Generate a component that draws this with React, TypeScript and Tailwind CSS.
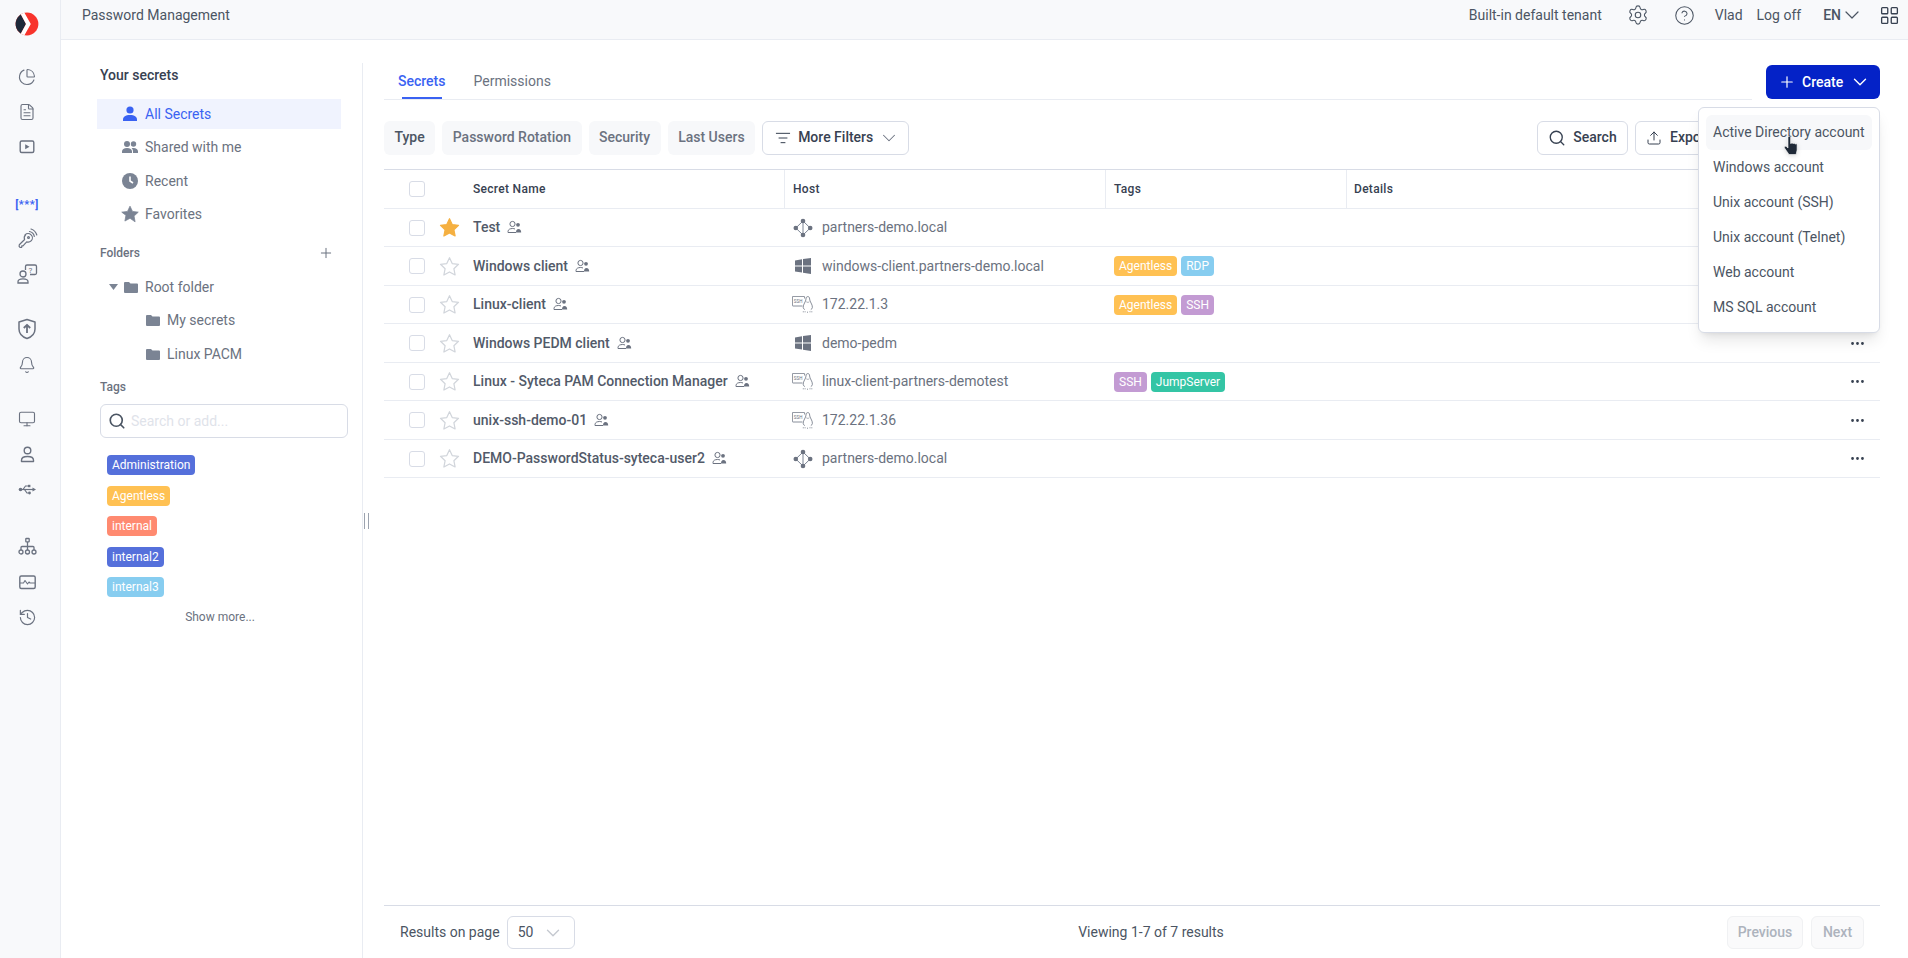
import React from "react";
import {
  ChartPie, FileText, Bell, Monitor, History, Settings, CircleHelp, ChevronDown, LayoutGrid, Plus, Search, Upload, ListFilter, Ellipsis,
} from "lucide-react";

const F = "[font-family:Roboto,sans-serif]";

function UsersMini({ className = "" }: { className?: string }) {
  return (
    <svg width="15" height="15" viewBox="0 0 15 15" fill="none" stroke="#6b7280" strokeWidth="1" className={className}>
      <circle cx="5.5" cy="4" r="2.6" />
      <path d="M1 12.5v-1c0-2 2-3 4.500-3 1 0 1.800.2 2.500.5" />
      <path d="M1 12.5h8" />
      <circle cx="11" cy="4.8" r="1.9" fill="#6b7280" stroke="none" />
      <path d="M9 12.5c0-2 .8-3.500 2.500-3.500s2.700 1.400 2.700 3.500z" fill="#6b7280" stroke="none" />
    </svg>
  );
}

function StarIcon({ filled = false }: { filled?: boolean }) {
  return (
    <svg width="21" height="21" viewBox="0 0 24 24" fill={filled ? "#f5b041" : "none"} stroke={filled ? "#f5b041" : "#d1d5db"} strokeWidth="1.4" strokeLinejoin="round" className="shrink-0">
      <path d="M12 2l3.100 6.600 7.200.9-5.300 5 1.400 7.200L12 18.200l-6.400 3.500L7 14.500l-5.300-5 7.200-.9z" />
    </svg>
  );
}

function DomainIcon() {
  return (
    <svg width="20" height="20" viewBox="0 0 20 20" fill="none" stroke="#7b8494" strokeWidth="1" className="shrink-0">
      <path d="M10 3 L2.800 10 L10 17 L17.200 10 Z M10 3 V17" />
      <circle cx="10" cy="3" r="2.300" fill="#6b7280" stroke="none" />
      <circle cx="2.800" cy="10" r="2.300" fill="#6b7280" stroke="none" />
      <circle cx="17.200" cy="10" r="2.300" fill="#6b7280" stroke="none" />
      <circle cx="10" cy="17" r="2.300" fill="#6b7280" stroke="none" />
    </svg>
  );
}

function WinIcon() {
  return (
    <svg width="16" height="16" viewBox="0 0 16 16" fill="#6b7280" className="shrink-0">
      <path d="M0 2.400 L7 1.300 V7.400 H0 Z M8 1.100 L16 0 V7.400 H8 Z M0 8.500 H7 V14.600 L0 13.600 Z M8 8.500 H16 V16 L8 14.800 Z" />
    </svg>
  );
}

function SshLinuxIcon() {
  return (
    <svg width="22" height="17" viewBox="0 0 22 17" fill="none" stroke="#6b7280" strokeWidth="0.8" className="shrink-0">
      <path d="M10.500 10H1a.6.6 0 0 1-.6-.6V1A.6.6 0 0 1 1 .4h11a.6.6 0 0 1 .6.6v1.500" />
      <text x="1.800" y="6.500" fontSize="4.500" fontFamily="Roboto" fill="#6b7280" stroke="none">SSH</text>
      <path d="M15.800.6c-1.300 0-1.800 1-1.800 2.400 0 2.500-3 5.500-2.800 8.300.1 1.200.7 1.900 1.600 2.300" />
      <path d="M15.800.6c1.300 0 1.800 1 1.800 2.400 0 2.500 3 5.500 2.800 8.300-.1 1.200-.7 1.900-1.600 2.300" />
      <path d="M14.300 5.800c.9.700 2.100.7 3 0" strokeWidth="0.6" />
      <path d="M10.800 15.800h3.200M15 16.200h1.500M17.500 15.800h3.200" strokeDasharray="1 .8" />
    </svg>
  );
}

function Tag({ t, c }: { t: string; c: string }) {
  return <span className={`inline-flex h-[20px] items-center rounded-[4px] px-[5px] text-[12px] leading-none text-white ${c}`}>{t}</span>;
}

const ORANGE = "bg-[#ffc153]";
const BLUE = "bg-[#5570db]";
const SALMON = "bg-[#ff8a70]";
const SKY = "bg-[#87cdf0]";
const PURPLE = "bg-[#c39bd3]";
const TEAL = "bg-[#34c5a5]";

const rows: { name: string; host: string; icon: "d" | "w" | "l"; star?: boolean; tags: [string, string][]; dots?: boolean; h: string }[] = [
  { name: "Test", host: "partners-demo.local", icon: "d", star: true, tags: [], h: "h-[38px]" },
  { name: "Windows client", host: "windows-client.partners-demo.local", icon: "w", tags: [["Agentless", ORANGE], ["RDP", SKY]], h: "h-[39px]" },
  { name: "Linux-client", host: "172.22.1.3", icon: "l", tags: [["Agentless", ORANGE], ["SSH", PURPLE]], h: "h-[38px]" },
  { name: "Windows PEDM client", host: "demo-pedm", icon: "w", tags: [], h: "h-[39px]", dots: true },
  { name: "Linux - Syteca PAM Connection Manager", host: "linux-client-partners-demotest", icon: "l", tags: [["SSH", PURPLE], ["JumpServer", TEAL]], dots: true, h: "h-[38px]" },
  { name: "unix-ssh-demo-01", host: "172.22.1.36", icon: "l", tags: [], dots: true, h: "h-[39px]" },
  { name: "DEMO-PasswordStatus-syteca-user2", host: "partners-demo.local", icon: "d", tags: [], dots: true, h: "h-[38px]" },
];

const I = "#6b7280";

function NavIcons() {
  return (
    <div className="flex flex-col items-center">
      <svg width="24" height="24" viewBox="0 0 24 24" className="mt-[12px]">
        <defs>
          <clipPath id="logoclip"><circle cx="12" cy="12" r="11.400" /></clipPath>
        </defs>
        <g clipPath="url(#logoclip)">
          <rect width="24" height="24" fill="#f8342c" />
          <polygon points="0,0 4.500,0 11,12 4.500,24 0,24" fill="#1f2a3a" />
          <polygon points="4.500,0 9,0 15.800,12 9,24 4.500,24 11,12" fill="#fff" />
        </g>
      </svg>
      <ChartPie size={18} color={I} strokeWidth={1.5} className="mt-[32px]" />
      <FileText size={18} color={I} strokeWidth={1.5} className="mt-[17px]" />
      <svg width="18" height="18" viewBox="0 0 18 18" fill="none" className="mt-[17px]">
        <rect x="2.200" y="3" width="13.600" height="11.500" rx="1.500" stroke={I} strokeWidth="1.400" />
        <path d="M7.200 6.300v5l4.300-2.500z" fill={I} />
      </svg>
      <div className="mt-[39px] flex h-[18px] items-center text-[11px] font-bold leading-none tracking-[0.5px] text-[#3a62f2]">[***]</div>
      <svg width="22" height="22" viewBox="0 0 22 22" fill="none" stroke={I} strokeWidth="1.200" strokeLinecap="round" strokeLinejoin="round" className="mt-[15px]">
        <path d="M9 6.800a4.300 4.300 0 0 1 6.100 6.100c-1.200 1.200-3 1.500-4.400 1L7 17.800l-1.200.1-.1 1.400-1.500.2-1.100-1.100.2-1.700 5.300-5.200c-.6-1.500-.3-3.400.9-4.500z" />
        <circle cx="12.500" cy="9.500" r="0.900" />
        <path d="M13.500 3.500a6 6 0 0 1 4.800 4.800M15 1a9 9 0 0 1 5.800 6" />
      </svg>
      <svg width="22" height="22" viewBox="0 0 22 22" fill="none" stroke={I} strokeWidth="1.300" className="mt-[13px]">
        <circle cx="7" cy="11" r="3" />
        <path d="M2 20v-1.200c0-2 2-3 5-3s5 1 5 3V20z" />
        <path d="M9.500 7V3.500A1.500 1.500 0 0 1 11 2h8a1.500 1.500 0 0 1 1.500 1.500V10A1.500 1.500 0 0 1 19 11.500h-5" />
        <text x="12.500" y="9.500" fontSize="8" fontFamily="Roboto" fill={I} stroke="none">?</text>
      </svg>
      <svg width="20" height="22" viewBox="0 0 20 22" fill="none" stroke={I} strokeWidth="1.500" strokeLinejoin="round" className="mt-[33px]">
        <path d="M10 1.500l8 2.500v7c0 5-3.500 8-8 9.500-4.500-1.500-8-4.500-8-9.500V4z" />
        <path d="M10 15V7M6.800 10L10 6.800l3.200 3.200" strokeWidth="1.800" />
      </svg>
      <Bell size={18} color={I} strokeWidth={1.5} className="mt-[16px]" />
      <Monitor size={18} color={I} strokeWidth={1.5} className="mt-[36px]" />
      <svg width="19" height="19" viewBox="0 0 19 19" fill="none" stroke={I} strokeWidth="1.400" className="mt-[17px]">
        <circle cx="9.500" cy="5.500" r="3.300" />
        <path d="M3.500 16.500v-1.300c0-2.200 2.500-3.700 6-3.700s6 1.500 6 3.700v1.300z" strokeLinejoin="round" />
      </svg>
      <svg width="19" height="19" viewBox="0 0 19 19" fill="none" stroke={I} strokeWidth="1.200" className="mt-[16px]">
        <circle cx="2.500" cy="9.500" r="1.800" fill={I} stroke="none" />
        <path d="M2.500 9.500H15" />
        <path d="M14.500 7.500v4l3.500-2z" fill={I} stroke="none" />
        <path d="M5 9.500l2.500-3.500h3" />
        <rect x="10" y="4.800" width="2.400" height="2.400" fill={I} stroke="none" />
        <path d="M6.500 9.500l2.500 3.500h1.500" />
        <circle cx="11.500" cy="13" r="1.400" fill={I} stroke="none" />
      </svg>
      <svg width="19" height="19" viewBox="0 0 19 19" fill="none" stroke={I} strokeWidth="1.300" className="mt-[38px]">
        <rect x="7.800" y="1.500" width="3.400" height="3.400" rx="0.600" />
        <circle cx="3" cy="15" r="2" />
        <circle cx="9.500" cy="15" r="2" />
        <circle cx="16" cy="15" r="2" />
        <path d="M9.500 5v8M3 13v-2.500c0-.5.4-1 1-1h11c.6 0 1 .5 1 1V13" />
      </svg>
      <svg width="19" height="19" viewBox="0 0 19 19" fill="none" stroke={I} strokeWidth="1.400" strokeLinejoin="round" className="mt-[17px]">
        <rect x="1.800" y="3" width="15.400" height="12.500" rx="1.500" />
        <path d="M2 10h3.500l1.500-2.500 2.500 3.500 1.500-2 1 1h5" strokeWidth="1.100" />
      </svg>
      <History size={19} color={I} strokeWidth={1.5} className="mt-[16px]" />
    </div>
  );
}

function SideRow({ label, active, icon }: { label: string; active?: boolean; icon: React.ReactNode }) {
  return (
    <div className={`flex h-[30px] items-center gap-[7px] pl-[25px] text-[14px] ${active ? "bg-[#f0f3fe] text-[#3a62f2]" : "text-[#6b7280]"}`}>
      <span className="flex w-[16px] justify-center">{icon}</span>
      <span>{label}</span>
    </div>
  );
}

function Folder({ className = "" }: { className?: string }) {
  return (
    <svg width="14" height="13" viewBox="0 0 14 13" fill="#7b8494" className={className}>
      <path d="M0 2a1 1 0 0 1 1-1h4l1.500 1.500H13a1 1 0 0 1 1 1V11a1 1 0 0 1-1 1H1a1 1 0 0 1-1-1z" />
    </svg>
  );
}

function Chip({ t, dark }: { t: string; dark?: boolean }) {
  return <div className={`flex h-[34px] items-center rounded-[6px] bg-[#f7f8fa] px-[10.5px] pb-[1px] text-[14px] font-medium ${dark ? "text-[#4b5563]" : "text-[#6b7280]"}`}>{t}</div>;
}

export default function App() {
  return (
    <div className={`flex h-screen w-full overflow-hidden bg-white text-[14px] text-[#4b5563] ${F}`}>
      <aside className="w-[61px] shrink-0 border-r border-[#e9ecf2] bg-[#f8f9fb]">
        <div className="w-[54px]"><NavIcons /></div>
      </aside>
      <div className="flex min-w-0 flex-1 flex-col">
        <header className="flex h-[40px] shrink-0 items-center border-b border-[#e9ecf2] bg-[#f8f9fb] pb-[9px] pl-[21px] pr-[8px] text-[14px] text-[#4b5563]">
          <span>Password Management</span>
          <div className="ml-auto flex items-center">
            <span>Built-in default tenant</span>
            <Settings size={22} strokeWidth={1.200} color="#4b5563" className="ml-[25px]" />
            <CircleHelp size={21} strokeWidth={1.200} color="#4b5563" className="ml-[25px]" />
            <span className="ml-[20px]">Vlad</span>
            <span className="ml-[14px]">Log off</span>
            <span className="ml-[22px] font-medium">EN</span>
            <ChevronDown size={24} strokeWidth={1.200} color="#4b5563" className="ml-[-1px]" />
            <LayoutGrid size={21} strokeWidth={1.500} color="#374151" className="ml-[15px]" />
          </div>
        </header>
        <div className="flex min-h-0 flex-1">
          <section className="relative w-[302px] shrink-0">
            <div className="absolute bottom-0 right-0 top-[23px] w-px bg-[#e9ecf2]" />
            <div className="pl-[39px] pt-[25px] text-[14px] font-medium leading-[20px] text-[#374151]">Your secrets</div>
            <div className="ml-[36px] mt-[14px] w-[244px]">
              <SideRow active label="All Secrets" icon={
                <svg width="16" height="16" viewBox="0 0 16 16" fill="#3a62f2"><circle cx="8" cy="4" r="3.600" /><path d="M1 15v-1.500C1 11 3.500 9 8 9s7 2 7 4.500V15z" /></svg>
              } />
              <div className="mt-[3px]"><SideRow label="Shared with me" icon={
                <svg width="16" height="14" viewBox="0 0 16 14" fill="#7b8494"><circle cx="5" cy="4" r="3" /><circle cx="11.500" cy="4" r="2.700" /><path d="M0 13v-1.500C0 9.500 2 8 5 8s5 1.500 5 3.500V13zM11 13v-1.500c0-1.500-.6-2.500-1.500-3.200.6-.2 1.300-.3 2-.3 2.500 0 4.500 1.300 4.500 3.300V13z" /></svg>
              } /></div>
              <div className="mt-[4px]"><SideRow label="Recent" icon={
                <svg width="16" height="16" viewBox="0 0 16 16"><circle cx="8" cy="8" r="8" fill="#7b8494" /><path d="M8 3.500V8l3 2" stroke="#fff" strokeWidth="1.600" fill="none" /></svg>
              } /></div>
              <div className="mt-[3px]"><SideRow label="Favorites" icon={
                <svg width="18" height="18" viewBox="0 0 24 24" fill="#7b8494" stroke="#7b8494" strokeWidth="1" strokeLinejoin="round" className="shrink-0"><path d="M12 1.500l3.300 7 7.700 1-5.600 5.300 1.400 7.600L12 17.700l-6.800 3.700 1.400-7.600L1 9.500l7.700-1z" /></svg>
              } /></div>
            </div>
            <div className="ml-[39px] mr-[29px] mt-[14px] flex items-center justify-between text-[12px] font-medium leading-[20px] text-[#6b7280]">
              <span>Folders</span>
              <Plus size={16} strokeWidth={1.500} color="#6b7280" />
            </div>
            <div className="ml-[47px] mt-[13px] flex h-[22px] items-center text-[14px] text-[#6b7280]">
              <svg width="12" height="8" viewBox="0 0 12 8" fill="#7b8494"><path d="M1 1h9L5.500 7z" /></svg>
              <Folder className="ml-[4px]" />
              <span className="ml-[7px]">Root folder</span>
            </div>
            <div className="ml-[85px] mt-[11px] flex h-[22px] items-center gap-[7px] text-[#6b7280]"><Folder /><span>My secrets</span></div>
            <div className="ml-[85px] mt-[12px] flex h-[22px] items-center gap-[7px] text-[#6b7280]"><Folder /><span>Linux PACM</span></div>
            <div className="ml-[39px] mt-[12px] text-[12px] font-medium leading-[20px] text-[#6b7280]">Tags</div>
            <div className="ml-[39px] mt-[7px] flex h-[34px] w-[248px] items-center rounded-[6px] border border-[#d8dce6] pl-[7px] text-[14px] text-[#dfe3ea]">
              <Search size={18} strokeWidth={2.200} color="#4b5563" />
              <span className="ml-[5px]">Search or add...</span>
            </div>
            <div className="ml-[46px] mt-[17px] flex flex-col items-start gap-[10.5px]">
              <Tag t="Administration" c={BLUE} />
              <Tag t="Agentless" c={ORANGE} />
              <Tag t="internal" c={SALMON} />
              <Tag t="internal2" c={BLUE} />
              <Tag t="internal3" c={SKY} />
            </div>
            <div className="ml-[39px] mt-[11px] w-[240px] text-center text-[12px] leading-[18px] text-[#6b7280]">Show more...</div>
            <div className="absolute right-[-6px] top-[473px] h-[16px] w-[5px] border-x border-[#9ca3af]" />
          </section>
          <main className="relative flex min-w-0 flex-1 flex-col pl-[21px] pr-[28px]">
            <div className="mr-[128px] flex h-[60px] shrink-0 items-end border-b border-[#e9ecf2]">
              <div className="relative ml-[14px] h-[28px] text-[14px] font-medium leading-[20px] text-[#3a62f2]">
                Secrets
                <div className="absolute bottom-0 left-[4px] h-[2px] w-[40px] bg-[#3a62f2]" />
              </div>
              <div className="ml-[28px] h-[28px] text-[14px] leading-[20px] text-[#6b7280]">Permissions</div>
            </div>
            <div className="mt-[21px] flex h-[34px] shrink-0 items-center gap-[7px]">
              <Chip t="Type" dark />
              <Chip t="Password Rotation" />
              <Chip t="Security" />
              <Chip t="Last Users" />
              <div className="flex h-[34px] w-[147px] items-center rounded-[6px] border border-[#d8dce6] pb-[1px] pl-[12px] text-[14px] font-medium text-[#374151]">
                <ListFilter size={16} strokeWidth={1.500} color="#374151" />
                <span className="ml-[7px]">More Filters</span>
                <ChevronDown size={22} strokeWidth={1.100} color="#6b7280" className="ml-[5px]" />
              </div>
              <div className="ml-auto flex h-[34px] w-[91px] items-center justify-center gap-[7px] rounded-[6px] border border-[#d8dce6] pb-[1px] text-[14px] font-medium text-[#374151]">
                <Search size={18} strokeWidth={1.800} color="#374151" />Search
              </div>
              <div className="flex h-[34px] w-[120px] items-center gap-[8px] rounded-[6px] border border-[#d8dce6] pb-[1px] pl-[10px] text-[14px] font-medium text-[#374151]">
                <Upload size={16} strokeWidth={1.500} color="#374151" />Export
              </div>
              <div className="w-[118px]" />
            </div>
            <div className="mt-[14px] shrink-0 border-t border-[#d8dce6]">
              <div className="flex h-[39px] items-stretch border-b border-[#e9ecf2] text-[12px] font-medium tracking-[0.3px] text-[#374151]">
                <div className="flex w-[400px] items-center pl-[25px]">
                  <span className="h-[16px] w-[16px] rounded-[3px] border border-[#d8dce6]" />
                  <span className="ml-[48px]">Secret Name</span>
                </div>
                <div className="flex w-[321px] items-center border-l border-[#e9ecf2] pl-[8px]">Host</div>
                <div className="flex w-[241px] items-center border-l border-[#e9ecf2] pl-[8px]">Tags</div>
                <div className="flex flex-1 items-center border-l border-[#e9ecf2] pl-[7px]">Details</div>
              </div>
              {rows.map((r) => (
                <div key={r.name} className={`flex items-center border-b border-[#e9ecf2] ${r.h}`}>
                  <div className="flex w-[400px] items-center pl-[25px]">
                    <span className="h-[16px] w-[16px] shrink-0 rounded-[3px] border border-[#d8dce6]" />
                    <span className="ml-[15px] flex w-[19px] justify-center"><StarIcon filled={r.star} /></span>
                    <span className="ml-[14px] font-medium text-[#525a69]">{r.name}</span>
                    <UsersMini className="ml-[7px]" />
                  </div>
                  <div className="flex w-[321px] items-center pl-[9px] text-[#6b7280]">
                    <span className="flex w-[20px] justify-center">
                      {r.icon === "d" ? <DomainIcon /> : r.icon === "w" ? <WinIcon /> : <SshLinuxIcon />}
                    </span>
                    <span className="ml-[9px]">{r.host}</span>
                  </div>
                  <div className="flex w-[241px] items-center gap-[4px] pl-[9px]">
                    {r.tags.map(([t, c]) => <Tag key={t} t={t} c={c} />)}
                  </div>
                  <div className="flex flex-1 justify-end pr-[14px]">
                    {r.dots && <Ellipsis size={17} strokeWidth={2} color="#374151" />}
                  </div>
                </div>
              ))}
            </div>
            <div className="mb-[9px] mt-auto flex h-[44px] shrink-0 items-end border-t border-[#d8dce6] text-[14px] text-[#4b5563]">
              <div className="flex h-[33px] flex-1 items-center pl-[16px]">
                Results on page
                <div className="ml-[7px] flex h-[33px] w-[68px] items-center rounded-[6px] border border-[#d8dce6] pl-[10px]">
                  50
                  <ChevronDown size={22} strokeWidth={1.500} color="#c5c9d0" className="ml-[9px]" />
                </div>
              </div>
              <div className="flex h-[33px] flex-1 items-center justify-center pl-[38px]">Viewing 1-7 of 7 results</div>
              <div className="flex h-[33px] flex-1 items-center justify-end gap-[8px] pr-[16px] text-[14px] font-medium text-[#adb3bd]">
                <div className="flex h-[33px] w-[76px] items-center justify-center rounded-[6px] border border-[#f0f1f3] bg-[#fafafb]">Previous</div>
                <div className="flex h-[33px] w-[53px] items-center justify-center rounded-[6px] border border-[#f0f1f3] bg-[#fafafb]">Next</div>
              </div>
            </div>
            <div className="absolute right-[28px] top-[25px] flex h-[34px] w-[114px] items-center rounded-[6px] bg-[#0422c7] pl-[12px] text-[14px] font-medium text-white">
              <Plus size={18} strokeWidth={1.600} color="#fff" />
              <span className="ml-[6px]">Create</span>
              <ChevronDown size={22} strokeWidth={1.500} color="#fff" className="ml-[6px]" />
            </div>
            <div className="absolute right-[28px] top-[67px] h-[226px] w-[182px] rounded-[6px] border border-[#d8dce6] bg-white px-[7px] pt-[7px] text-[14px] text-[#4b5563] shadow-lg">
              {["Active Directory account", "Windows account", "Unix account (SSH)", "Unix account (Telnet)", "Web account", "MS SQL account"].map((t, i) => (
                <div key={t} className={`relative flex h-[35px] items-center rounded-[6px] pl-[7px] ${i === 0 ? "bg-[#f7f8fa]" : ""}`}>
                  {t}
                  {i === 0 && (
                    <svg width="16" height="19" viewBox="0 0 16 19" className="absolute left-[77px] top-[21px] drop-shadow-sm">
                      <path d="M5 1.500a1.300 1.300 0 0 1 2.600 0V7.500h.5a1.100 1.100 0 0 1 2 .3 1.100 1.100 0 0 1 2 .4 1.100 1.100 0 0 1 2 .8V14l-1 4.500H6L1.500 12a1.200 1.200 0 0 1 1.800-1.500L5 12z" fill="#1f2937" stroke="#fff" strokeWidth="0.600" />
                    </svg>
                  )}
                </div>
              ))}
            </div>
          </main>
        </div>
      </div>
    </div>
  );
}
